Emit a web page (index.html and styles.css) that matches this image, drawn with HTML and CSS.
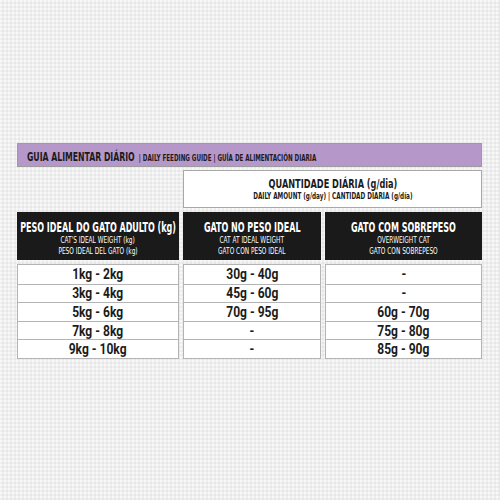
FILE: index.html
```html
<!DOCTYPE html>
<html>
<head>
<meta charset="utf-8">
<link rel="stylesheet" href="styles.css">
</head>
<body>
<div class="page">
  <div class="title-bar">
    <span class="title-wrap"><span class="title-main">GUIA ALIMENTAR DIÁRIO</span><span class="title-sub">| DAILY FEEDING GUIDE | GUÍA DE ALIMENTACIÓN DIARIA</span></span>
  </div>
  <div class="grid">
    <div class="spacer"></div>
    <div class="qty-box">
      <div class="qty-main">QUANTIDADE DIÁRIA (g/dia)</div>
      <div class="qty-sub">DAILY AMOUNT (g/day) | CANTIDAD DIARIA (g/día)</div>
    </div>

    <div class="head">
      <div class="head-main">PESO IDEAL DO GATO ADULTO (kg)</div>
      <div class="head-sub">CAT'S IDEAL WEIGHT (kg)</div>
      <div class="head-sub">PESO IDEAL DEL GATO (kg)</div>
    </div>
    <div class="head">
      <div class="head-main">GATO NO PESO IDEAL</div>
      <div class="head-sub">CAT AT IDEAL WEIGHT</div>
      <div class="head-sub">GATO CON PESO IDEAL</div>
    </div>
    <div class="head">
      <div class="head-main">GATO COM SOBREPESO</div>
      <div class="head-sub">OVERWEIGHT CAT</div>
      <div class="head-sub">GATO CON SOBREPESO</div>
    </div>

    <div class="col">
      <div class="cell"><span>1kg - 2kg</span></div>
      <div class="cell"><span>3kg - 4kg</span></div>
      <div class="cell"><span>5kg - 6kg</span></div>
      <div class="cell"><span>7kg - 8kg</span></div>
      <div class="cell"><span>9kg - 10kg</span></div>
    </div>
    <div class="col">
      <div class="cell"><span>30g - 40g</span></div>
      <div class="cell"><span>45g - 60g</span></div>
      <div class="cell"><span>70g - 95g</span></div>
      <div class="cell"><span>-</span></div>
      <div class="cell"><span>-</span></div>
    </div>
    <div class="col">
      <div class="cell"><span>-</span></div>
      <div class="cell"><span>-</span></div>
      <div class="cell"><span>60g - 70g</span></div>
      <div class="cell"><span>75g - 80g</span></div>
      <div class="cell"><span>85g - 90g</span></div>
    </div>
  </div>
</div>
</body>
</html>
```
FILE: styles.css
```css
html, body {
  margin: 0;
  padding: 0;
}
body {
  width: 500px;
  height: 500px;
  background-color: #efefef;
  background-image:
    radial-gradient(circle at 1px 1px, #f8f8f8 0.8px, transparent 1.2px),
    radial-gradient(circle at 3px 3px, #e6e6e6 0.8px, transparent 1.2px);
  background-size: 4px 4px, 4px 4px;
  overflow: hidden;
}
.page {
  padding: 143px 0 0 17px;
  width: 465px;
}
.title-bar {
  box-sizing: border-box;
  height: 24px;
  background: #b697c9;
  border: 1px solid #9c9c9c;
  display: flex;
  align-items: center;
  padding-left: 9px;
  font-family: "DejaVu Sans Condensed", "DejaVu Sans", sans-serif;
  color: #1b1b1b;
  white-space: nowrap;
  overflow: hidden;
}
.title-wrap {
  display: inline-block;
  transform: scaleX(0.69);
  transform-origin: left center;
}
.title-main {
  font-weight: bold;
  font-size: 12.5px;
  margin-right: 6px;
}
.title-sub {
  font-size: 9px;
  font-weight: bold;
}
.grid {
  display: grid;
  grid-template-columns: 162px 138px 157px;
  column-gap: 4px;
  margin-top: 3px;
}
.spacer {
  height: 38px;
}
.qty-box {
  grid-column: 2 / 4;
  box-sizing: border-box;
  height: 38px;
  background: #fff;
  border: 1px solid #a8a8a8;
  display: flex;
  flex-direction: column;
  align-items: center;
  justify-content: center;
  font-family: "DejaVu Sans Condensed", "DejaVu Sans", sans-serif;
  color: #1b1b1b;
  white-space: nowrap;
}
.qty-main {
  font-weight: bold;
  font-size: 13px;
  line-height: 14px;
  transform: scaleX(0.7);
}
.qty-sub {
  font-size: 8px;
  font-weight: bold;
  line-height: 11px;
  transform: scaleX(0.79);
}
.head {
  margin-top: 4px;
  box-sizing: border-box;
  height: 48px;
  background: #1a1a1a;
  color: #fff;
  display: flex;
  flex-direction: column;
  align-items: center;
  padding-top: 8px;
  font-family: "DejaVu Sans Condensed", "DejaVu Sans", sans-serif;
  white-space: nowrap;
}
.head-main {
  font-weight: bold;
  font-size: 13.5px;
  line-height: 15px;
  transform: scaleX(0.66);
}
.head-sub {
  font-size: 9px;
  line-height: 11px;
  transform: scaleX(0.72);
}
.col {
  margin-top: 4px;
  box-sizing: border-box;
  border: 1px solid #b4b4b4;
  background: #fff;
  display: flex;
  flex-direction: column;
}
.cell {
  height: 18.6px;
  box-sizing: border-box;
  border-top: 1px solid #b4b4b4;
  display: flex;
  align-items: center;
  justify-content: center;
  font-family: Roboto, "Liberation Sans", sans-serif;
  font-weight: bold;
  font-size: 14px;
  color: #1b1b1b;
  white-space: nowrap;
}
.cell span {
  display: inline-block;
  transform: scaleX(0.86);
}
.cell:first-child {
  border-top: none;
}
```
